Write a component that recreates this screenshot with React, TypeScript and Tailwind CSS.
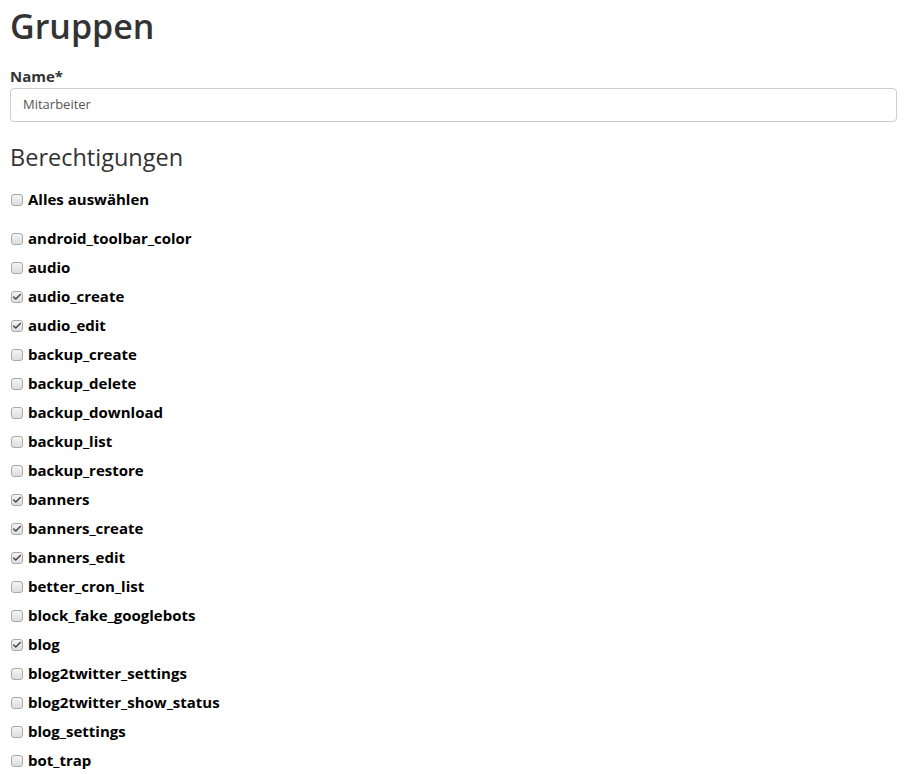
import { Check } from "lucide-react";

const permissions: { name: string; checked: boolean }[] = [
  { name: "android_toolbar_color", checked: false },
  { name: "audio", checked: false },
  { name: "audio_create", checked: true },
  { name: "audio_edit", checked: true },
  { name: "backup_create", checked: false },
  { name: "backup_delete", checked: false },
  { name: "backup_download", checked: false },
  { name: "backup_list", checked: false },
  { name: "backup_restore", checked: false },
  { name: "banners", checked: true },
  { name: "banners_create", checked: true },
  { name: "banners_edit", checked: true },
  { name: "better_cron_list", checked: false },
  { name: "block_fake_googlebots", checked: false },
  { name: "blog", checked: true },
  { name: "blog2twitter_settings", checked: false },
  { name: "blog2twitter_show_status", checked: false },
  { name: "blog_settings", checked: false },
  { name: "bot_trap", checked: false },
];

function Box({ checked }: { checked: boolean }) {
  return (
    <span className="flex size-[12px] shrink-0 items-center justify-center rounded-[3px] border border-[#a9a9a9] bg-gradient-to-b from-[#f4f4f4] to-[#dedede]">
      {checked && <Check className="size-[10px] stroke-[#444]" strokeWidth={3.5} />}
    </span>
  );
}

function Row({ label, checked }: { label: string; checked: boolean }) {
  return (
    <label className="flex h-[29px] items-center gap-[5px] pl-[1px]">
      <Box checked={checked} />
      <span className="text-[15px] font-bold text-black">{label}</span>
    </label>
  );
}

export default function App() {
  return (
    <div
      className="min-h-screen bg-white px-[10px] text-[#333]"
      style={{ fontFamily: '"Open Sans", "Liberation Sans", sans-serif' }}
    >
      <h1 className="pt-[2px] text-[34px] font-semibold leading-[48px] text-[#333]">Gruppen</h1>
      <div className="mt-[16px]">
        <div className="text-[15px] font-bold leading-[20px] text-[#333]">Name*</div>
        <div className="mt-[2px] flex h-[34px] w-[887px] items-center rounded-[4px] border border-[#ccc] px-[12px] text-[13px] text-[#555]">
          Mitarbeiter
        </div>
      </div>
      <h3 className="mt-[20px] text-[23.5px] leading-[30px] text-[#333]">Berechtigungen</h3>
      <div className="mt-[13px]">
        <Row label="Alles auswählen" checked={false} />
      </div>
      <div className="mt-[10px]">
        {permissions.map((p) => (
          <Row key={p.name} label={p.name} checked={p.checked} />
        ))}
      </div>
    </div>
  );
}
